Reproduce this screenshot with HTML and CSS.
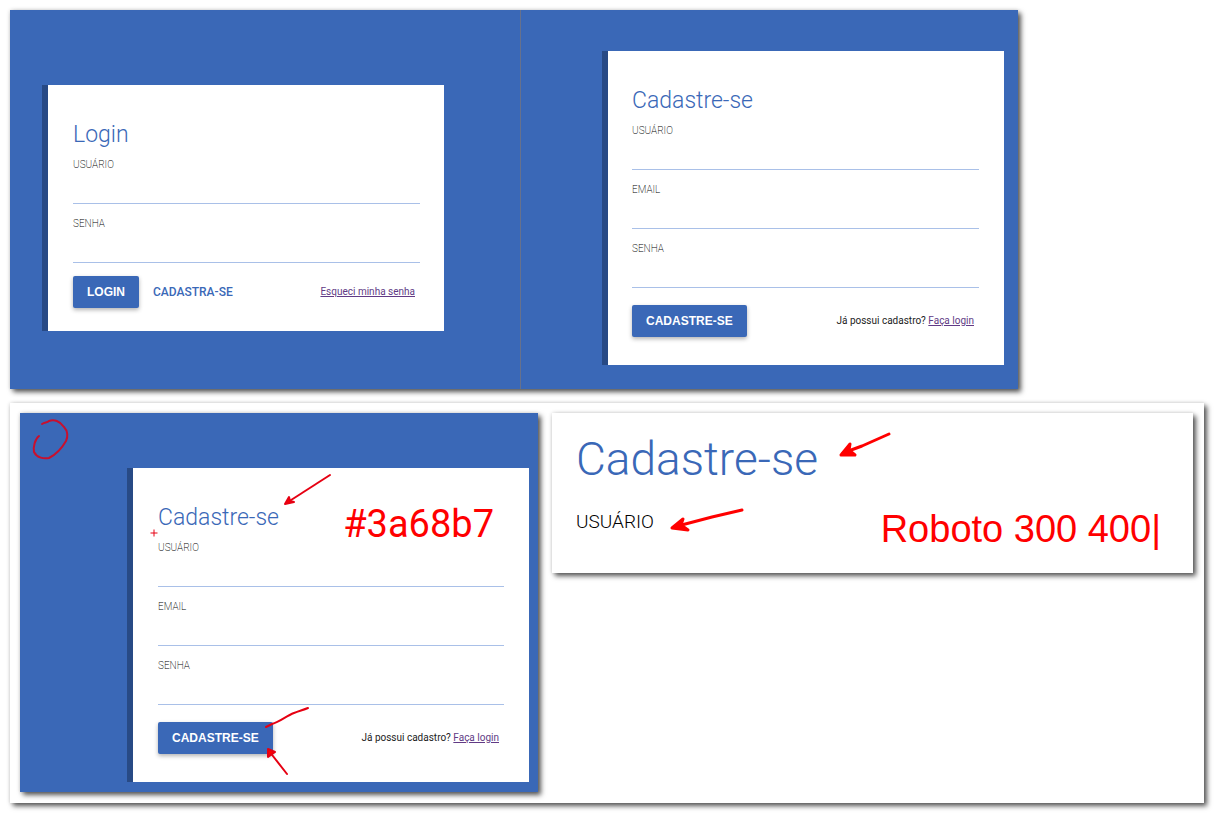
FILE: index.html
```
<!DOCTYPE html>
<html lang="pt-BR">
<head>
<meta charset="utf-8">
<meta name="viewport" content="width=device-width, initial-scale=1">
<title>Login e cadastro</title>
<link rel="stylesheet" href="styles.css">
</head>
<body>
<main class="board">
  <div class="screens raised">
    <section class="pane pane-login">
      <form class="card">
        <h1 class="title">Login</h1>
        <div class="fields">
          <div class="field"><label for="login-user">USUÁRIO</label><input id="login-user" type="text"></div>
          <div class="field"><label for="login-pass">SENHA</label><input id="login-pass" type="password"></div>
        </div>
        <div class="actions actions-login">
          <button class="btn" type="button">LOGIN</button>
          <button class="btn btn-flat" type="button">CADASTRA-SE</button>
          <p class="hint"><a href="#">Esqueci minha senha</a></p>
        </div>
      </form>
    </section>
    <section class="pane pane-signup">
      <form class="card">
        <h1 class="title">Cadastre-se</h1>
        <div class="fields">
          <div class="field"><label for="new-user">USUÁRIO</label><input id="new-user" type="text"></div>
          <div class="field"><label for="new-mail">EMAIL</label><input id="new-mail" type="email"></div>
          <div class="field"><label for="new-pass">SENHA</label><input id="new-pass" type="password"></div>
        </div>
        <div class="actions">
          <button class="btn" type="button">CADASTRE-SE</button>
          <p class="hint">Já possui cadastro? <a href="#">Faça login</a></p>
        </div>
      </form>
    </section>
  </div>

  <div class="notes raised">
    <section class="review raised">
      <form class="card">
        <h1 class="title">Cadastre-se</h1>
        <div class="fields">
          <div class="field"><label for="rev-user">USUÁRIO</label><input id="rev-user" type="text"></div>
          <div class="field"><label for="rev-mail">EMAIL</label><input id="rev-mail" type="email"></div>
          <div class="field"><label for="rev-pass">SENHA</label><input id="rev-pass" type="password"></div>
        </div>
        <div class="actions">
          <button class="btn" type="button">CADASTRE-SE</button>
          <p class="hint">Já possui cadastro? <a href="#">Faça login</a></p>
        </div>
      </form>
      <svg class="ink" width="518" height="380" viewBox="0 0 518 380" aria-hidden="true">
        <path class="circle" d="M22 11C25 9 27 10 29 8C34 6 40 8 44 14C48 18 48 24 46 28C42 35 37 41 29 45C24 46 17 45 14 39C13 34 15 26 19 23"/>
        <path d="M310 62L268 89"/>
        <path class="tip" d="M265 91L269 84L270 88L274 89Z"/>
        <path class="cross" d="M131 120H137M134 117V123"/>
        <path d="M246 314L252 311C260 309 266 303 274 300C279 298 283 297 288 295"/>
        <path d="M267 361L249 338"/>
        <path class="tip" d="M248 336L255 339L248 344Z"/>
      </svg>
      <p class="remark remark-color">#3a68b7</p>
    </section>
    <section class="type raised">
      <h2 class="type-title">Cadastre-se</h2>
      <p class="type-label">USUÁRIO</p>
      <svg class="ink ink-thick" width="340" height="160" viewBox="0 0 340 160" aria-hidden="true">
        <path d="M337 21L310 33L291 40"/>
        <path class="tip" d="M289 42L298 31L297 37L303 42Z"/>
        <path d="M190 97L160 104L122 114"/>
        <path class="tip" d="M120 115L131 106L129 112L136 117Z"/>
      </svg>
      <p class="remark remark-font">Roboto 300 400|</p>
    </section>
  </div>
</main>
</body>
</html>
```
FILE: styles.css
```
* { box-sizing: border-box; }

body {
  margin: 0;
  background: #fff;
  color: #222;
  font-family: Roboto, "Liberation Sans", sans-serif;
}

h1, h2, p { margin: 0; }

.board {
  display: flex;
  flex-direction: column;
  gap: 14px;
  padding: 10px 11px 11px 10px;
}

.raised { box-shadow: 3px 3px 5px rgba(0, 0, 0, .65), 0 0 4px rgba(0, 0, 0, .15); }

.screens {
  display: grid;
  grid-template-columns: 511fr 497fr;
  max-width: 1008px;
  background: #3a68b7;
}

.pane-login {
  padding: 75px 76px 58px 32px;
  border-right: 1px solid #67718c;
}

.pane-signup { padding: 41px 14px 24px 81px; }

.card {
  padding: 35px 25px 28px 24px;
  border-left: 6px solid #284a85;
  background: #fff;
}

.pane-login .card { padding: 35px 24px 23px 25px; }

.title {
  color: #3a68b7;
  font-size: 23px;
  font-weight: 300;
  line-height: 30px;
}

.fields {
  display: grid;
  gap: 12px;
  margin-top: 7px;
}

.field label {
  display: block;
  color: #000;
  font-size: 10px;
  font-weight: 200;
  line-height: 16px;
}

.field input {
  display: block;
  width: 100%;
  height: 31px;
  padding: 0;
  border: 0;
  border-bottom: 1px solid #a9c0e8;
  border-radius: 0;
  background: transparent;
  font: inherit;
  outline: 0;
}

.actions {
  display: flex;
  align-items: center;
  margin-top: 17px;
}

.actions-login { margin-top: 13px; }

.btn {
  height: 32px;
  padding: 0 14px;
  border: 0;
  border-radius: 2px;
  background: #3a68b7;
  box-shadow: 0 2px 4px rgba(0, 0, 0, .3);
  color: #fff;
  font: bold 12px "Liberation Sans", Arial, sans-serif;
}

.btn-flat {
  background: transparent;
  box-shadow: none;
  color: #3a68b7;
  font: 500 12px Roboto, sans-serif;
}

.hint {
  margin-left: auto;
  padding-right: 5px;
  font-size: 10px;
  line-height: 16px;
}

.hint a { color: #613a85; }

.notes {
  display: grid;
  grid-template-columns: 518fr 641fr;
  align-items: start;
  gap: 14px;
  padding: 10px 11px 11px 10px;
  background: #fff;
}

.review {
  position: relative;
  padding: 55px 9px 10px 107px;
  background: #3a68b7;
}

.review .card { padding-left: 25px; }

.type {
  position: relative;
  padding: 18px 24px 36px;
  background: #fff;
}

.type-title {
  color: #3a68b7;
  font-size: 46px;
  font-weight: 300;
  line-height: 56px;
}

.type-label {
  margin-top: 20px;
  color: #000;
  font-size: 19px;
  font-weight: 300;
  line-height: 30px;
}

/* Red pen marks drawn over the screens */
.ink {
  position: absolute;
  top: 0;
  left: 0;
  fill: none;
  stroke: #e60012;
  stroke-width: 2;
  stroke-linecap: round;
  stroke-linejoin: round;
  pointer-events: none;
}

.ink .tip { fill: #f00; }

.ink .circle { stroke: #c8102e; }

.ink .cross {
  stroke-width: 1;
  stroke-linecap: square;
}

.ink-thick { stroke: #f00; stroke-width: 3; }

.remark {
  position: absolute;
  color: #f00;
  font-size: 38px;
  line-height: 46px;
  white-space: nowrap;
}

.remark-color { top: 88px; right: 44px; }

.remark-font {
  top: 93px;
  right: 32px;
  font-family: "Liberation Sans", Arial, sans-serif;
}
```
